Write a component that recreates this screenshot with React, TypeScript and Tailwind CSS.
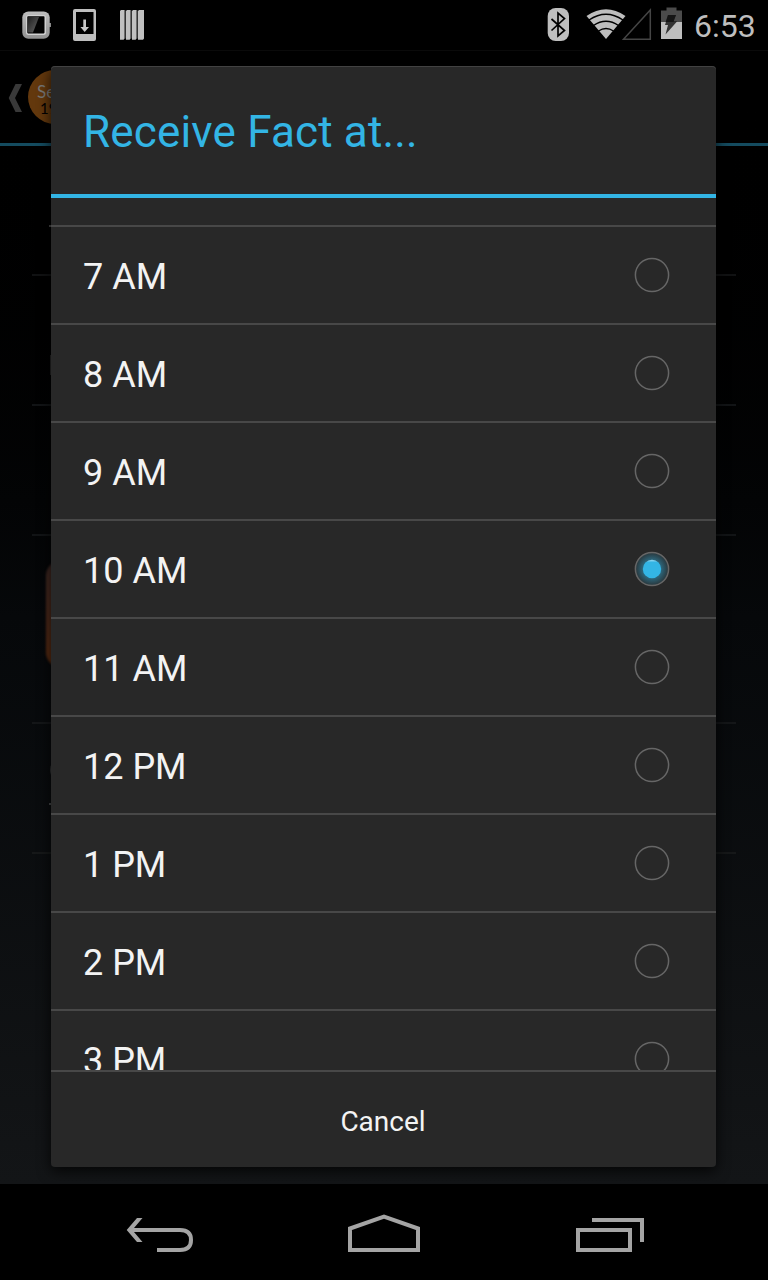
const hours = ["7 AM", "8 AM", "9 AM", "10 AM", "11 AM", "12 PM", "1 PM", "2 PM", "3 PM"];

function Radio({ checked }: { checked: boolean }) {
  return (
    <svg width="36" height="36" viewBox="0 0 36 36" className="shrink-0">
      <defs>
        <radialGradient id="glow">
          <stop offset="0.5" stopColor="#33b5e5" stopOpacity="0.48" />
          <stop offset="1" stopColor="#33b5e5" stopOpacity="0.1" />
        </radialGradient>
        <linearGradient id="dot" x1="0" y1="0" x2="0" y2="1">
          <stop offset="0" stopColor="#9edcf3" />
          <stop offset="0.14" stopColor="#33b5e5" />
        </linearGradient>
      </defs>
      {checked && <circle cx="18" cy="18" r="16.5" fill="url(#glow)" />}
      <circle cx="18" cy="18" r="16.6" fill="none" stroke="#666" strokeWidth="1.5" />
      {checked && <circle cx="18" cy="18" r="9.2" fill="url(#dot)" />}
    </svg>
  );
}

function StatusBar() {
  return (
    <header className="flex h-[50px] shrink-0 items-center justify-between bg-black pr-3 pl-5">
      <svg width="130" height="50" viewBox="20 0 130 50">
        <defs>
          <linearGradient id="metal" x1="0" y1="0" x2="0" y2="1">
            <stop offset="0" stopColor="#bdbdbd" />
            <stop offset="1" stopColor="#929292" />
          </linearGradient>
          <linearGradient id="glass" x1="0" y1="0" x2="1" y2="1">
            <stop offset="0" stopColor="#333" />
            <stop offset="1" stopColor="#aaa" />
          </linearGradient>
        </defs>
        <path d="M49 23h2v4h-2z" fill="#888" />
        <rect x="22.300" y="11.500" width="27.400" height="27.200" rx="6" fill="url(#metal)" />
        <rect x="26" y="15" width="20" height="20" rx="2.500" fill="#d0d0d0" />
        <rect x="27.300" y="16.200" width="17.200" height="17.200" rx="0.800" fill="#020202" />
        <path d="M28 17h11l-6 15.500h-5z" fill="url(#glass)" opacity="0.6" />
        <path fillRule="evenodd" d="M75 9h19q2 0 2 2v28q0 2-2 2H75q-2 0-2-2V11q0-2 2-2zm1 3v22h17.500V12z" fill="#bebebe" />
        <path d="M83.300 19.500h2.700v7.500h3l-4.300 5-4.300-5h2.900z" fill="#c8c8c8" />
        <path d="M120 11l1-1h3.600v28.500l-1 1.200h-3.600zM126 11l1-1h3.600v28.500l-1 1.200h-3.600zM132 11l1-1h3.600v28.500l-1 1.200h-3.600zM138 11l1-1h5v28.500l-1 1.200h-5z" fill="#c0c0c0" />
        <path d="M125 10.500v28M131 10.500v28M137 10.500v28" fill="none" stroke="#686868" strokeWidth="1" />
      </svg>
      <div className="flex items-center">
        <svg width="146" height="50" viewBox="544 0 146 50">
          <rect x="547.700" y="8" width="21.300" height="33" rx="8" fill="#bebebe" />
          <path d="M551.500 19l13 11.500-6.500 5.500V13l6.500 5.500-13 12" fill="none" stroke="#000" strokeWidth="1.700" />
          <path d="M606 39L586.500 16q19.500-13.500 39 0z" fill="#bebebe" />
          <path d="M589 20q17-11.500 34 0M593.500 25.500q12.500-8.500 25 0M598.500 31q7.500-5 15 0" fill="none" stroke="#000" strokeWidth="1.500" />
          <path d="M623.500 39.300H650.300V10z" fill="none" stroke="#454545" strokeWidth="1.500" />
          <path d="M661 10.500h5.500V7.500h10v3h5.500V22h-21z" fill="#4b4b4b" />
          <path d="M661 22h21v17h-21z" fill="#bebebe" />
          <path d="M668 15h8l-2.500 6.500h3.500l-11.500 13 2.500-9.500H665z" fill="#333" />
          <path d="M668 15h8l-2.500 6.500h3.500l-.500.500H665.700z" fill="#151515" />
        </svg>
        <span className="w-[66px] pt-0.5 pl-1 text-[32px] leading-[50px] whitespace-nowrap text-[#bebebe]">6:53</span>
      </div>
    </header>
  );
}

function Backdrop() {
  return (
    <div className="flex flex-1 flex-col bg-linear-to-b from-black via-[#06080a] to-[#131517]">
      <div className="flex h-24 shrink-0 items-center border-t border-b-[3px] border-t-[#0a0a0a] border-b-[#144b5f] pl-2">
        <svg width="16" height="30" viewBox="0 0 16 30" className="mt-px">
          <path d="M7.500 1H14L7 15l7 14H7.500L.7 15z" fill="#393939" />
        </svg>
        <div className="ml-1 flex h-[54px] w-[54px] flex-col bg-[#63380d] pt-[13px] pl-[9px] leading-[17px] rounded-full font-['Lato',sans-serif]">
          <span className="text-[17px] text-[#777]">Sep</span>
          <span className="pl-[3px] text-[15px] text-black">19</span>
        </div>
      </div>
      <div className="mx-8 flex flex-1 flex-col text-[#303234]">
        <div className="h-[130px] shrink-0 border-b-2 border-[#111213] pt-[79px] pl-[17px]">
          <div className="h-0.5 w-2 bg-[#484848]" />
        </div>
        <div className="flex h-[130px] shrink-0 items-start border-b-2 border-[#121416] pt-[79px] pl-[18px]">
          <div className="h-5 w-1 bg-[#252525]" />
        </div>
        <div className="h-[130px] shrink-0 border-b-2 border-[#121416]" />
        <div className="flex h-[188px] shrink-0 items-start border-b-2 border-[#141618] pt-6 pl-[14px]">
          <div className="h-[108px] w-[108px] rounded-2xl bg-linear-to-b from-[#3c2723] to-[#5c2b0d] blur-[1px]" />
        </div>
        <div className="flex h-[130px] shrink-0 flex-col border-b-2 border-[#161819] pt-[34px] pl-[17px]">
          <div className="ml-px h-6 w-6 rounded-full border-2 border-[#303234]" />
          <div className="mt-[21px] h-0.5 w-4 bg-[#45484a]" />
        </div>
      </div>
    </div>
  );
}

function NavBar() {
  return (
    <nav className="flex h-24 shrink-0 items-start justify-between bg-black pt-[30px] pr-[124px] pl-[126px]">
      <svg width="68" height="40" viewBox="126 1214 68 40" fill="none" stroke="#a4a4a4" strokeWidth="4">
        <path d="M130 1230h50q11 0 11 10t-11 10h-23" />
        <path d="M137 1218h5.500l-10.200 12 10.200 12H137l-10.300-12z" fill="#a4a4a4" stroke="none" />
      </svg>
      <svg width="72" height="40" viewBox="348 1214 72 40" className="-ml-[2px]" fill="none" stroke="#a4a4a4" strokeWidth="4">
        <path d="M350 1250v-21.500l34-12 34 12V1250z" />
      </svg>
      <svg width="68" height="40" viewBox="576 1214 68 40" fill="none" stroke="#a4a4a4" strokeWidth="4">
        <path d="M578 1230h52v20h-52zM592 1220h50v22" />
      </svg>
    </nav>
  );
}

export default function App() {
  return (
    <div className="relative flex h-[1280px] w-[768px] flex-col overflow-hidden bg-black font-['Roboto',sans-serif]">
      <StatusBar />
      <Backdrop />
      <NavBar />
      <section
        role="dialog"
        className="absolute top-[66px] left-[51px] flex h-[1101px] w-[665px] flex-col overflow-hidden rounded-[4px] bg-[#282828] shadow-[0_4px_14px_rgba(0,0,0,0.8),inset_0_1px_0_#424242]"
      >
        <h1 className="flex h-[132px] shrink-0 items-center border-b-4 border-[#33b5e5] pt-1 pl-8 text-[44px] tracking-[0.17px] text-[#33b5e5]">
          Receive Fact at...
        </h1>
        <div className="flex min-h-0 flex-1 flex-col overflow-hidden pt-[27px]">
          {hours.map((hour) => (
            <div
              key={hour}
              className="flex h-[98px] shrink-0 items-center justify-between border-t-2 border-[#484848] pr-[46px] pl-8 text-4xl text-[#f3f3f3]"
            >
              <span className="pt-1">{hour}</span>
              <Radio checked={hour === "10 AM"} />
            </div>
          ))}
        </div>
        <button className="h-[97px] shrink-0 border-t-2 border-[#484848] pt-1 pr-px text-[28px] text-[#f3f3f3]">Cancel</button>
      </section>
    </div>
  );
}
